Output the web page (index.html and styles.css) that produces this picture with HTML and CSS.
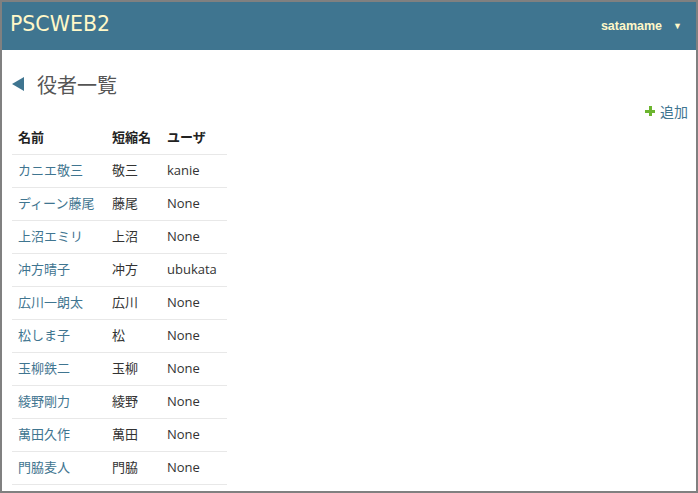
FILE: index.html
```html
<!DOCTYPE html>
<html lang="ja">
<head>
<meta charset="utf-8">
<title>PSCWEB2</title>
<link rel="stylesheet" href="styles.css">
</head>
<body>
<div class="frame">
  <header class="topbar">
    <div class="brand">PSCWEB2</div>
    <div class="user">satamame <span class="caret">▼</span></div>
  </header>
  <main class="content">
    <h1 class="page-title"><span class="back"></span>役者一覧</h1>
    <div class="actions"><a class="add"><span class="plus"></span>追加</a></div>
    <table class="list">
      <thead>
        <tr><th class="c1">名前</th><th class="c2">短縮名</th><th class="c3">ユーザ</th></tr>
      </thead>
      <tbody>
        <tr><td><a>カニエ敬三</a></td><td>敬三</td><td>kanie</td></tr>
        <tr><td><a>ディーン藤尾</a></td><td>藤尾</td><td>None</td></tr>
        <tr><td><a>上沼エミリ</a></td><td>上沼</td><td>None</td></tr>
        <tr><td><a>冲方晴子</a></td><td>冲方</td><td>ubukata</td></tr>
        <tr><td><a>広川一朗太</a></td><td>広川</td><td>None</td></tr>
        <tr><td><a>松しま子</a></td><td>松</td><td>None</td></tr>
        <tr><td><a>玉柳鉄二</a></td><td>玉柳</td><td>None</td></tr>
        <tr><td><a>綾野剛力</a></td><td>綾野</td><td>None</td></tr>
        <tr><td><a>萬田久作</a></td><td>萬田</td><td>None</td></tr>
        <tr><td><a>門脇麦人</a></td><td>門脇</td><td>None</td></tr>
      </tbody>
    </table>
  </main>
</div>
</body>
</html>
```

FILE: styles.css
```css
html, body {
  margin: 0;
  padding: 0;
  height: 100%;
}
body {
  font-family: "Open Sans", "Noto Sans CJK JP", sans-serif;
  color: #333;
  background: #fff;
}
.frame {
  box-sizing: border-box;
  height: 100vh;
  border: 2px solid #808080;
  overflow: hidden;
}
.topbar {
  height: 48px;
  background: #3f7590;
  display: flex;
  align-items: center;
  justify-content: space-between;
  padding: 0 14px 0 8px;
}
.brand {
  font-family: "DejaVu Sans", sans-serif;
  font-size: 20.5px;
  color: #fff8c8;
  margin-top: -4px;
}
.user {
  font-family: "Liberation Sans", Arial, sans-serif;
  font-weight: bold;
  font-size: 12.5px;
  color: #fff8c8;
  display: flex;
  align-items: center;
  gap: 11px;
}
.caret {
  font-size: 9px;
}
.content {
  padding: 0 8px 0 10px;
}
.page-title {
  margin: 20px 0 0 0;
  height: 28px;
  display: flex;
  align-items: center;
  font-weight: normal;
  font-size: 20px;
  color: #555;
  font-family: "Noto Sans CJK JP", sans-serif;
}
.back {
  width: 0;
  height: 0;
  border-top: 7px solid transparent;
  border-bottom: 7px solid transparent;
  border-right: 12px solid #3f7590;
  margin-right: 13px;
}
.actions {
  display: flex;
  justify-content: flex-end;
  height: 20px;
  margin-top: 3px;
}
.add {
  display: flex;
  align-items: center;
  font-size: 14px;
  color: #3f7590;
  font-family: "Noto Sans CJK JP", sans-serif;
  gap: 5px;
}
.plus {
  width: 10px;
  height: 10px;
  background:
    linear-gradient(#6cb52f, #6cb52f) center / 10px 3px no-repeat,
    linear-gradient(#6cb52f, #6cb52f) center / 3px 10px no-repeat;
}
.list {
  border-collapse: collapse;
  font-size: 13px;
}
.list th, .list td {
  box-sizing: border-box;
  height: 33px;
  padding: 0 6px 2px;
  text-align: left;
  vertical-align: middle;
  border-bottom: 1px solid #e8e8e8;
  white-space: nowrap;
}
.list th {
  font-weight: bold;
  color: #222;
}
.list .c1 { width: 94px; }
.list .c2 { width: 55px; }
.list .c3 { width: 66px; }
.list a {
  color: #3f7590;
}
```
